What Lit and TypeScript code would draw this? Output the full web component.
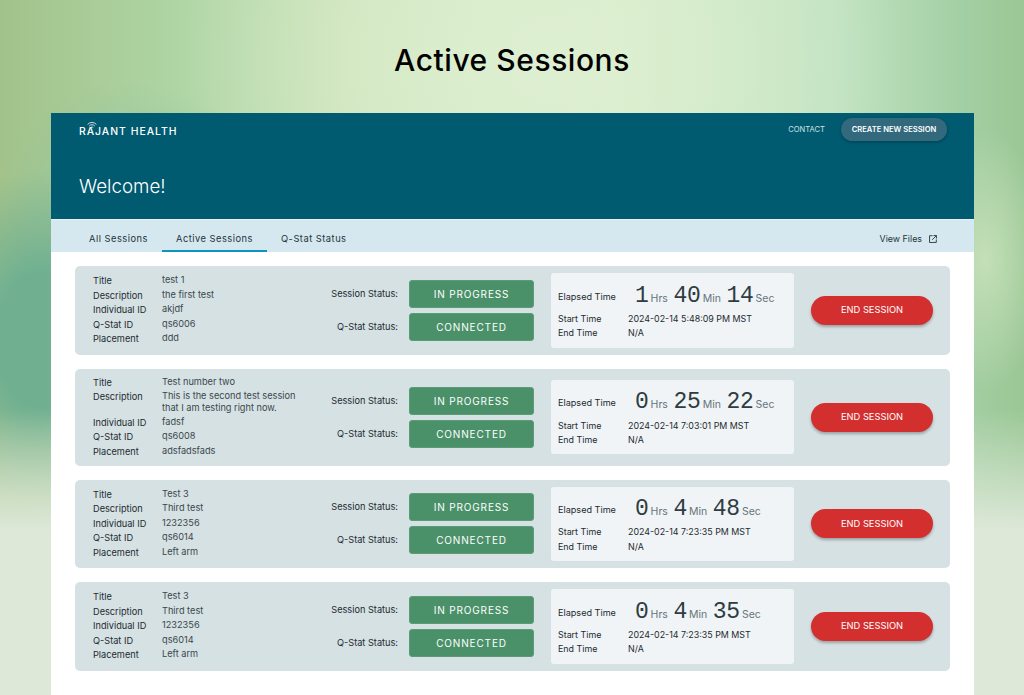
import { LitElement, html, css } from "lit";
import { customElement } from "lit/decorators.js";

interface S { title: string; desc: string[]; id: string; qs: string; place: string; h: string; m: string; s: string; start: string; }
const sessions: S[] = [
  { title: "test 1", desc: ["the first test"], id: "akjdf", qs: "qs6006", place: "ddd", h: "1", m: "40", s: "14", start: "2024-02-14 5:48:09 PM MST" },
  { title: "Test number two", desc: ["This is the second test session", "that I am testing right now."], id: "fadsf", qs: "qs6008", place: "adsfadsfads", h: "0", m: "25", s: "22", start: "2024-02-14 7:03:01 PM MST" },
  { title: "Test 3", desc: ["Third test"], id: "1232356", qs: "qs6014", place: "Left arm", h: "0", m: "4", s: "48", start: "2024-02-14 7:23:35 PM MST" },
  { title: "Test 3", desc: ["Third test"], id: "1232356", qs: "qs6014", place: "Left arm", h: "0", m: "4", s: "35", start: "2024-02-14 7:23:35 PM MST" },
];

@customElement("app-root")
export class AppRoot extends LitElement {
  static styles = css`
    :host { display: block; height: 695px; overflow: hidden; opacity: .999; font-family: Inter, "Liberation Sans", sans-serif; color: #1d2b30;
      background:
        linear-gradient(180deg, rgba(221,232,216,0) 0, rgba(221,232,216,0) 410px, #dde8d8 530px),
        radial-gradient(ellipse 110px 170px at 40px 340px, rgba(112,176,145,1) 40%, rgba(112,176,145,0) 100%),
        radial-gradient(ellipse 130px 120px at 130px 200px, rgba(140,195,160,.8), rgba(140,195,160,0) 100%),
        radial-gradient(ellipse 60px 130px at 985px 260px, rgba(205,228,190,.8), rgba(205,228,190,0) 100%),
        radial-gradient(ellipse 360px 300px at 540px 60px, rgba(222,240,210,.9), rgba(222,240,210,0) 100%),
        linear-gradient(90deg, #a2c28a 0%, #b0d6a6 18%, #cfe4bc 36%, #d8ecca 60%, #bfe2c0 82%, #a3cfa4 94%, #9bc795 100%);
    }
    .page-title { margin: 0; height: 113px; box-sizing: border-box; padding-top: 41px; text-align: center; font-size: 30px; line-height: 38px; font-weight: 500; letter-spacing: .55px; color: #000; }
    .panel { margin: 0 50px 0 51px; background: #fff; height: 582px; }
    .top { background: #005a70; height: 106px; box-sizing: border-box; padding: 5px 27px 0 28px; color: #fff; }
    .nav { display: flex; align-items: center; justify-content: space-between; height: 23px; }
    .logo { position: relative; font-size: 10.4px; font-weight: 500; letter-spacing: 1px; line-height: 23px; padding-top: 2px; height: 21px; }
    .logo svg { position: absolute; left: 6px; top: 3px; }
    .nav-right { display: flex; align-items: center; gap: 16px; }
    .contact { font-size: 7.6px; color: #d3e0e4; }
    .create { background: #32697d; color: #fff; font-size: 7.6px; font-weight: 600; height: 23px; width: 106px; border-radius: 12px; display: flex; align-items: center; justify-content: center; box-shadow: 0 1px 3px rgba(0,0,0,.3); }
    .welcome { margin-top: 32px; font-size: 18.8px; font-weight: 300; line-height: 28px; }
    .tabs { background: #d5e8ef; height: 33px; display: flex; align-items: stretch; padding: 0 37px 0 24px; border-top: 1px solid #e8f2f5; box-sizing: border-box; font-size: 9.3px; letter-spacing: .5px; color: #24343a; }
    .tab { padding: 5px 14px 0; display: flex; align-items: center; box-sizing: border-box; }
    .tab.on { border-bottom: 2px solid #0a96bf; padding: 7px 14px 0; }
    .files { margin-left: auto; display: flex; align-items: center; gap: 7px; letter-spacing: 0; padding-top: 5px; font-size: 8.9px; }
    .files svg { width: 8px; height: 8px; }
    .list { padding: 14px 24px; display: flex; flex-direction: column; gap: 14px; }
    .card { background: #d6e1e4; border-radius: 5px; padding: 7px 17px 7px 18px; display: flex; align-items: center; font-size: 9.2px; line-height: 12px; }
    .info { width: 238px; flex: none; display: grid; grid-template-columns: 69px 1fr; row-gap: 2.5px; padding: 1px 0; }
    .info .v { margin-top: -1px; color: #39474c; }
    .statuses { flex: none; width: 203px; display: grid; grid-template-columns: 1fr 125px; column-gap: 11px; row-gap: 5px; align-items: center; justify-items: end; }
    .pill { width: 125px; height: 28px; box-sizing: border-box; background: #4a9169; color: #fff; border-radius: 3px; border: 1px solid #5b9c78; display: flex; align-items: center; justify-content: center; font-size: 10px; letter-spacing: .85px; font-weight: 400; }
    .timer { flex: none; margin-left: 17px; width: 243px; height: 74.6px; box-sizing: border-box; background: #f0f4f6; border-radius: 3px; padding: 13.5px 7px 0; display: grid; grid-template-columns: 70px 1fr; align-content: start; row-gap: 2.4px; font-size: 8.9px; }
    .clock { display: flex; align-items: baseline; margin-left: 7px; height: 22px; line-height: 22px; margin-top: -2px; margin-bottom: 4px; }
    .el { font-size: 9.1px; line-height: 20px; margin-bottom: 2px; }
    .num { font-family: "Liberation Mono", monospace; font-size: 23px; letter-spacing: -.2px; color: #2f3c42; margin-right: 2px; }
    .unit { font-size: 10.5px; color: #66757b; margin-right: 5.5px; }
    .end { flex: none; margin-left: 17px; width: 122px; height: 29px; border-radius: 15px; background: #d32f2f; color: #fff; font-size: 9.3px; font-weight: 400; display: flex; align-items: center; justify-content: center; box-shadow: 0 2px 3px rgba(0,0,0,.28); }
  `;

  render() {
    return html`
      <h1 class="page-title">Active Sessions</h1>
      <div class="panel">
        <div class="top">
          <div class="nav">
            <div class="logo">RAJANT HEALTH
              <svg width="14" height="9" viewBox="0 0 14 9" fill="none" stroke="#fff" stroke-width=".8"><path d="M2.6 3.4A6 6 0 0 1 11.4 3.4M4.2 5A3.8 3.8 0 0 1 9.8 5M5.7 6.6A1.8 1.8 0 0 1 8.3 6.6"/></svg>
            </div>
            <div class="nav-right"><span class="contact">CONTACT</span><span class="create">CREATE NEW SESSION</span></div>
          </div>
          <div class="welcome">Welcome!</div>
        </div>
        <div class="tabs">
          <div class="tab">All Sessions</div>
          <div class="tab on">Active Sessions</div>
          <div class="tab">Q-Stat Status</div>
          <div class="files">View Files
            <svg viewBox="0 0 9 9" fill="none" stroke="#24343a" stroke-width="1"><path d="M4 .8H.6V8.4H8.2V5M5 .6H8.4V4M8.2 .8 3.6 5.4"/></svg>
          </div>
        </div>
        <div class="list">
          ${sessions.map((s) => html`
            <div class="card">
              <div class="info">
                <div>Title</div><div class="v">${s.title}</div>
                <div>Description</div><div class="v">${s.desc.map((d) => html`<div>${d}</div>`)}</div>
                <div>Individual ID</div><div class="v">${s.id}</div>
                <div>Q-Stat ID</div><div class="v">${s.qs}</div>
                <div>Placement</div><div class="v">${s.place}</div>
              </div>
              <div class="statuses">
                <div>Session Status:</div><div class="pill">IN PROGRESS</div>
                <div>Q-Stat Status:</div><div class="pill">CONNECTED</div>
              </div>
              <div class="timer">
                <div class="el">Elapsed Time</div>
                <div class="clock"><span class="num">${s.h}</span><span class="unit">Hrs</span><span class="num">${s.m}</span><span class="unit">Min</span><span class="num">${s.s}</span><span class="unit">Sec</span></div>
                <div>Start Time</div><div>${s.start}</div>
                <div>End Time</div><div>N/A</div>
              </div>
              <div class="end">END SESSION</div>
            </div>`)}
        </div>
      </div>`;
  }
}
